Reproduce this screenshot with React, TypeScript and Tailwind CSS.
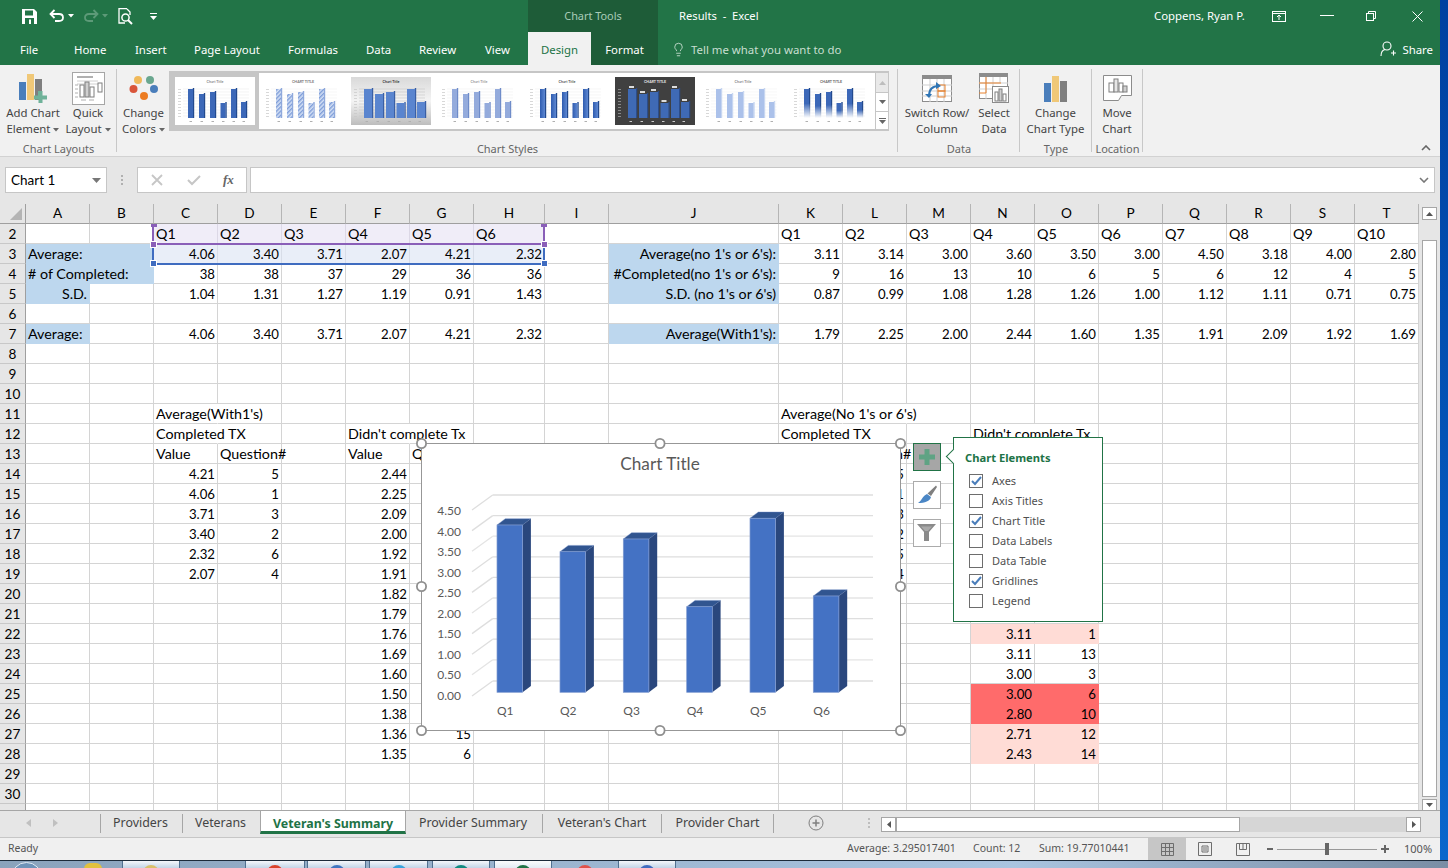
import React from 'react';
import { Lightbulb } from 'lucide-react';

const COLS = 'ABCDEFGHIJKLMNOPQRST'.split('');
type Cell = { t?: string; a?: 'r' | 'l'; bg?: string; nb?: boolean; span?: boolean; skip?: boolean };
const cells: Record<string, Cell> = {};
const put = (k: string, c: Cell) => { cells[k] = { ...(cells[k] || {}), ...c }; };
const rowFill = (row: number, start: string, vals: string[]) => {
  const s = COLS.indexOf(start);
  vals.forEach((v, i) => put(COLS[s + i] + row, { t: v, a: /^[0-9.]+$/.test(v) ? 'r' : 'l' }));
};
const q = (n: number) => Array.from({ length: n }, (_, i) => 'Q' + (i + 1));
rowFill(2, 'C', q(6));
rowFill(2, 'K', q(10));
rowFill(3, 'C', ['4.06', '3.40', '3.71', '2.07', '4.21', '2.32']);
rowFill(3, 'K', ['3.11', '3.14', '3.00', '3.60', '3.50', '3.00', '4.50', '3.18', '4.00', '2.80']);
rowFill(4, 'C', ['38', '38', '37', '29', '36', '36']);
rowFill(4, 'K', ['9', '16', '13', '10', '6', '5', '6', '12', '4', '5']);
rowFill(5, 'C', ['1.04', '1.31', '1.27', '1.19', '0.91', '1.43']);
rowFill(5, 'K', ['0.87', '0.99', '1.08', '1.28', '1.26', '1.00', '1.12', '1.11', '0.71', '0.75']);
rowFill(7, 'C', ['4.06', '3.40', '3.71', '2.07', '4.21', '2.32']);
rowFill(7, 'K', ['1.79', '2.25', '2.00', '2.44', '1.60', '1.35', '1.91', '2.09', '1.92', '1.69']);
const BLUE = 'b';
put('A3', { t: 'Average:', bg: BLUE, span: true }); put('B3', { skip: true });
put('A4', { t: '# of Completed:', bg: BLUE, span: true }); put('B4', { skip: true });
put('A5', { t: 'S.D.', a: 'r', bg: BLUE });
put('A7', { t: 'Average:', bg: BLUE });
put('J3', { t: "Average(no 1's or 6's):", a: 'r', bg: BLUE });
put('J4', { t: "#Completed(no 1's or 6's):", a: 'r', bg: BLUE });
put('J5', { t: "S.D. (no 1's or 6's)", a: 'r', bg: BLUE });
put('J7', { t: "Average(With1's):", a: 'r', bg: BLUE });
put('C11', { t: "Average(With1's)", nb: true });
put('C12', { t: 'Completed TX', nb: true });
put('F12', { t: "Didn't complete Tx", nb: true });
put('K11', { t: "Average(No 1's or 6's)", nb: true }); put('L11', { nb: true });
put('K12', { t: 'Completed TX', nb: true });
put('N12', { t: "Didn't complete Tx", nb: true });
rowFill(13, 'C', ['Value', 'Question#']);
rowFill(13, 'F', ['Value', 'Question#']);
rowFill(13, 'L', ['Question#']);
[['4.21', '5'], ['4.06', '1'], ['3.71', '3'], ['3.40', '2'], ['2.32', '6'], ['2.07', '4']].forEach((r, i) => rowFill(14 + i, 'C', r));
['2.44', '2.25', '2.09', '2.00', '1.92', '1.91', '1.82', '1.79', '1.76', '1.69', '1.60', '1.50', '1.38', '1.36', '1.35'].forEach((v, i) => rowFill(14 + i, 'F', [v]));
rowFill(27, 'G', ['15']);
rowFill(28, 'G', ['6']);
['5', '1', '3', '2', '5', '4'].forEach((v, i) => rowFill(14 + i, 'L', [v]));
[['3.11', '1', 'p'], ['3.11', '13', ''], ['3.00', '3', ''], ['3.00', '6', 'r'], ['2.80', '10', 'r'], ['2.71', '12', 'p'], ['2.43', '14', 'p']].forEach((r, i) => {
  rowFill(22 + i, 'N', [r[0], r[1]]);
  if (r[2]) { put('N' + (22 + i), { bg: r[2] }); put('O' + (22 + i), { bg: r[2] }); }
});
COLS.slice(2, 8).forEach((c) => { put(c + '2', { bg: 'v' }); put(c + '3', { bg: 'w' }); });

function cellClass(c: Cell) {
  const base = 'box-border border-r border-b px-[2px] whitespace-nowrap text-black';
  const fill =
    c.bg === 'b' ? 'bg-[#bdd7ee] border-transparent'
    : c.bg === 'p' ? 'bg-[#ffdcd6] border-transparent'
    : c.bg === 'r' ? 'bg-[#ff6b6b] border-transparent'
    : c.bg === 'v' ? 'bg-[#f0edf8] border-[#dcd8e6]'
    : c.bg === 'w' ? 'bg-[#e9eef8] border-[#d8dde8]'
    : c.nb ? 'border-r-transparent border-b-[#d4d4d4]' : 'border-[#d4d4d4]';
  const numeric = !!c.t && /^[0-9.]+$/.test(c.t);
  const size = numeric ? 'text-[13.2px] leading-[21px]' : 'text-[14.3px] leading-[20px]';
  const dir = c.a === 'r' ? 'text-right' : 'text-left';
  const span = c.span ? 'col-span-2' : '';
  return [base, fill, size, dir, span].join(' ');
}

function Sheet() {
  const rows = Array.from({ length: 30 }, (_, i) => i + 2);
  return (
    <div className="grid grid-cols-[26px_64px_64px_64px_64px_64px_64px_64px_71px_64px_170px_64px_64px_64px_64px_64px_64px_64px_64px_64px_64px] auto-rows-[20px] [font-family:Lato,sans-serif] text-[13.6px]">
      <div className="box-border bg-[#e6e6e6] border-r border-b border-[#9f9f9f] flex items-end justify-end pr-[3px] pb-[3px]">
        <svg width="12" height="12" viewBox="0 0 12 12"><path d="M12 0V12H0Z" fill="#b4b4b4" /></svg>
      </div>
      {COLS.map((c) => (
        <div key={c} className="box-border bg-[#e6e6e6] border-b border-b-[#9f9f9f] border-r border-r-[#b5b5b5] text-center text-black leading-[19px]">{c}</div>
      ))}
      {rows.map((r) => (
        <React.Fragment key={r}>
          <div className="box-border bg-[#e6e6e6] border-r border-r-[#9f9f9f] border-b border-b-[#c8c8c8] text-center text-black leading-[21px]">{r <= 30 ? r : ''}</div>
          {COLS.map((c) => {
            const d = cells[c + r] || {};
            if (d.skip) return null;
            return <div key={c} className={cellClass(d)}>{d.t}</div>;
          })}
        </React.Fragment>
      ))}
    </div>
  );
}

function SelectionFrames() {
  return (
    <>
      <div className="absolute left-[152px] top-[20px] w-[393px] h-[21px] border-x-2 border-b-2 border-[#8a5fb8]" />
      <div className="absolute left-[152px] top-[41px] w-[393px] h-[20px] border-x-2 border-b-2 border-[#3f6cc0]" />
      {[[151, 20], [541, 20]].map(([x, y], i) => (
        <div key={i} className="absolute w-[6px] h-[3px] bg-[#8a5fb8]" style={{ left: x, top: y }} />
      ))}
      {[[150, 37], [541, 37]].map(([x, y], i) => (
        <div key={i} className="absolute w-[7px] h-[7px] bg-[#8a5fb8] border border-white" style={{ left: x, top: y }} />
      ))}
      {[[150, 56], [541, 56]].map(([x, y], i) => (
        <div key={i} className="absolute w-[7px] h-[7px] bg-[#3f6cc0] border border-white" style={{ left: x, top: y }} />
      ))}
    </>
  );
}

const BARS = [
  { l: 'Q1', x: 497, top: 525 },
  { l: 'Q2', x: 560, top: 551.7 },
  { l: 'Q3', x: 623.3, top: 539 },
  { l: 'Q4', x: 686.7, top: 606.7 },
  { l: 'Q5', x: 750, top: 518.3 },
  { l: 'Q6', x: 813.3, top: 596 },
];
const GRID_Y = [495, 515.6, 536.2, 556.8, 577.4, 598, 618.6, 639.2, 659.8, 681];
const AXIS = ['4.50', '4.00', '3.50', '3.00', '2.50', '2.00', '1.50', '1.00', '0.50', '0.00'];

function Chart() {
  const hs = [[421.5, 443.5], [660, 443.5], [900.5, 443.5], [421.5, 586.5], [900.5, 586.5], [421.5, 730.5], [660, 730.5], [900.5, 730.5]];
  return (
    <div className="absolute left-[421px] top-[239px] w-[480px] h-[288px] bg-white border-[1.5px] border-[#979797] box-border">
      <svg className="absolute left-[-1.5px] top-[-0.5px] overflow-visible [font-family:Lato,sans-serif]" width="480" height="287" viewBox="421 444 480 287">
        <text x="660" y="470" textAnchor="middle" fontSize="17.2" fill="#595959">Chart Title</text>
        {GRID_Y.map((y, i) => (
          <g key={i} stroke={i % 3 === 2 ? '#e4e4e4' : '#dedede'} strokeWidth="1.3">
            <line x1="492.7" y1={y} x2="873" y2={y} />
            <line x1="472" y1={y + 15} x2="492.7" y2={y} />
          </g>
        ))}
        {AXIS.map((a, i) => (
          <text key={a} x="461" y={515 + i * 20.55} textAnchor="end" fontSize="12" fill="#595959">{a}</text>
        ))}
        {BARS.map((b) => (
          <g key={b.l}>
            <path d={`M${b.x} ${b.top}l8.3 -6.3h25.6l-8.3 6.3z`} fill="#315590" stroke="#6f8cc4" strokeWidth=".4" />
            <path d={`M${b.x + 25.6} ${b.top}l8.3 -6.3V686l-8.3 6.3z`} fill="#2a477d" />
            <rect x={b.x} y={b.top} width="25.6" height={692.3 - b.top} fill="#4472c4" stroke="#7f9ad0" strokeWidth=".7" />
            <text x={b.x} y="715" fontSize="12" fill="#595959">{b.l}</text>
          </g>
        ))}
        {hs.map(([x, y], i) => (
          <circle key={i} cx={x} cy={y} r="4.6" fill="#fff" stroke="#8f8f8f" strokeWidth="1.8" />
        ))}
      </svg>
    </div>
  );
}

function ChartButtons() {
  return (
    <div className="absolute left-[913px] top-[239px] flex flex-col gap-[10px]">
      <div className="w-[28px] h-[28px] box-border bg-[#a6a6a6] border border-[#217346] flex items-center justify-center">
        <svg width="16" height="16" viewBox="0 0 16 16"><path d="M5.5 0h5v5.5H16v5h-5.5V16h-5v-5.5H0v-5h5.5z" fill="#5fa384" /></svg>
      </div>
      <div className="w-[28px] h-[28px] box-border bg-white border border-[#ababab]">
        <svg width="26" height="26" viewBox="1 1 26 26"><path d="M23 4.500l1 1.500-6 9-3.500-2.500z" fill="#7f7f7f" /><path d="M14 13l4 3c-1 4-6 6-13 6 4-2 4-7 9-9z" fill="#4a86c5" /></svg>
      </div>
      <div className="w-[28px] h-[28px] box-border bg-white border border-[#ababab]">
        <svg width="26" height="26" viewBox="1 1 26 26"><path d="M4 5h19l-7 8v9h-5v-9z" fill="#8a8a8a" /><path d="M8 7.500h11l-4 4.500h-3z" fill="#a9a9a9" /></svg>
      </div>
    </div>
  );
}

function CheckRow({ label, on }: { label: string; on?: boolean }) {
  return (
    <div className="flex items-center h-[20px]">
      <div className="w-[14px] h-[14px] box-border border border-[#6d6d6d] bg-white flex items-center justify-center mr-[9px]">
        {on && <svg width="11" height="10" viewBox="0 0 11 10"><path d="M1 5l3 3 6-7" fill="none" stroke="#4a7ebb" strokeWidth="2" /></svg>}
      </div>
      <span>{label}</span>
    </div>
  );
}

function Popup() {
  return (
    <div className="absolute left-[953px] top-[233px] w-[150px] h-[185px] box-border bg-white border border-[#217346] [font-family:'Noto_Sans',sans-serif] text-[11px] text-[#505050]">
      <div className="absolute left-[-6px] top-[13px] w-[11px] h-[11px] bg-white border-l border-b border-[#217346] rotate-45" />
      <div className="relative pl-[11px] pt-[12px] font-bold text-[#217346] text-[11.2px] leading-[16px]">Chart Elements</div>
      <div className="relative pl-[15px] pt-[5px]">
        <CheckRow label="Axes" on />
        <CheckRow label="Axis Titles" />
        <CheckRow label="Chart Title" on />
        <CheckRow label="Data Labels" />
        <CheckRow label="Data Table" />
        <CheckRow label="Gridlines" on />
        <CheckRow label="Legend" />
      </div>
    </div>
  );
}

const THUMB_H = [29, 24, 26, 15, 29, 16];
const THUMB_X = [13, 24, 35, 45.5, 56, 66];
type TK = { bg: string; front: string; side: string; w: number; title: string; tc: string; grid: string; labels?: boolean };
const TK_LIST: TK[] = [
  { bg: '#ffffff', front: '#3c68b8', side: '#234a8e', w: 5, title: 'Chart Title', tc: '#8a8a8a', grid: '#ececec' },
  { bg: '#ffffff', front: 'url(#hatch)', side: '#8fa9dc', w: 5, title: 'CHART TITLE', tc: '#777', grid: '#f2f2f2' },
  { bg: 'url(#gray)', front: '#5a85cf', side: '#3a5fa4', w: 8, title: 'Chart Title', tc: '#333', grid: '#c8c8c8' },
  { bg: '#ffffff', front: '#94abdc', side: '#6f8cc9', w: 5, title: 'Chart Title', tc: '#999', grid: '#f0f0f0' },
  { bg: '#ffffff', front: 'url(#blue)', side: '#234a8e', w: 5, title: 'Chart Title', tc: '#555', grid: '#f0f0f0' },
  { bg: '#404040', front: '#3f6ab5', side: '#2c4d8a', w: 8, title: 'CHART TITLE', tc: '#e8e8e8', grid: '#404040', labels: true },
  { bg: '#ffffff', front: '#abc1ea', side: '#c7d6f1', w: 5, title: 'Chart Title', tc: '#888', grid: '#f4f4f4' },
  { bg: '#ffffff', front: 'url(#fade)', side: 'url(#fade2)', w: 5, title: 'CHART TITLE', tc: '#666', grid: '#efefef' },
];

function Thumb({ k }: { k: TK }) {
  return (
    <svg width="80" height="48" viewBox="0 0 80 48" className="[font-family:Lato,sans-serif] shrink-0">
      <defs>
        <pattern id="hatch" width="3" height="3" patternUnits="userSpaceOnUse" patternTransform="rotate(45)">
          <rect width="3" height="3" fill="#d4e0f5" /><rect width="1.4" height="3" fill="#7d9cd8" />
        </pattern>
        <linearGradient id="gray" x1="0" y1="0" x2="0" y2="1"><stop offset="0" stopColor="#d9d9d9" /><stop offset=".5" stopColor="#f4f4f4" /><stop offset="1" stopColor="#bdbdbd" /></linearGradient>
        <linearGradient id="blue" x1="0" y1="0" x2="1" y2="0"><stop offset="0" stopColor="#2f5cb0" /><stop offset="1" stopColor="#5e88d2" /></linearGradient>
        <linearGradient id="fade" x1="0" y1="0" x2="0" y2="1"><stop offset=".5" stopColor="#3c68b8" /><stop offset="1" stopColor="#ffffff" /></linearGradient>
        <linearGradient id="fade2" x1="0" y1="0" x2="0" y2="1"><stop offset=".5" stopColor="#234a8e" /><stop offset="1" stopColor="#ffffff" /></linearGradient>
      </defs>
      <rect width="80" height="48" fill={k.bg} />
      <text x="40" y="6" textAnchor="middle" fontSize="3.6" fontWeight="700" fill={k.tc}>{k.title}</text>
      {[12, 15, 18, 21, 24, 27, 30, 33, 36, 39].map((y) => (
        <g key={y}>
          <line x1="8" x2="74" y1={y} y2={y} stroke={k.grid} strokeWidth=".6" />
          <rect x="3" y={y} width="3" height=".7" fill={k.bg === '#404040' ? '#aaa' : '#c8c8c8'} />
        </g>
      ))}
      {THUMB_H.map((h, i) => (
        <g key={i}>
          <rect x={THUMB_X[i] + k.w - 0.2} y={41 - h - 1} width="1.4" height={h + 1} fill={k.side} />
          <rect x={THUMB_X[i]} y={41 - h} width={k.w} height={h} fill={k.front} />
          {k.labels && <rect x={THUMB_X[i] + 1} y={41 - h - 3} width="5" height="2" fill="#ddd" />}
          <rect x={THUMB_X[i] + 1.5} y="44" width="2.5" height="1" fill={k.bg === '#404040' ? '#ccc' : '#b0b0b0'} />
        </g>
      ))}
    </svg>
  );
}

function Big({ w, icon, l1, l2, caret }: { w: number; icon: React.ReactNode; l1: string; l2: string; caret?: boolean }) {
  return (
    <div className="flex flex-col items-center shrink-0" style={{ width: w }}>
      <div className="h-[38px] w-full flex items-center justify-center">{icon}</div>
      <div className="leading-[16px] mt-[-2px] whitespace-nowrap text-center">{l1}</div>
      <div className="leading-[16px] whitespace-nowrap text-center flex items-center justify-center">
        {l2}
        {caret && <svg className="ml-[3px] mt-[1px]" width="6" height="4" viewBox="0 0 6 4"><path d="M0 0h6L3 3.500z" fill="#666" /></svg>}
      </div>
    </div>
  );
}

function Group({ w, label, children, border = true }: { w: number; label: string; children: React.ReactNode; border?: boolean }) {
  return (
    <div className="relative shrink-0 h-full flex flex-col" style={{ width: w }}>
      <div className="flex flex-1 pt-[4px]">{children}</div>
      <div className="h-[22px] leading-[24px] text-center text-[11px] text-[#666]">{label}</div>
      {border && <div className="absolute right-0 top-[4px] bottom-[4px] w-px bg-[#c8c8c8]" />}
    </div>
  );
}

function Ribbon() {
  return (
    <div className="relative h-[92px] bg-[#f1f1f1] border-b border-[#d2d2d2] box-border flex text-[11.4px] text-[#444] [font-family:'Noto_Sans',sans-serif]">
      <Group w={117} label="Chart Layouts">
        <Big w={66} l1="Add Chart" l2="Element" caret icon={
          <svg width="30" height="30" viewBox="0 0 30 30"><rect x="1" y="9" width="7" height="18" fill="#4a7ebb" /><rect x="9" y="1" width="7" height="26" fill="#f0c878" /><rect x="17" y="6" width="7" height="21" fill="#7f7f7f" /><path d="M20 18h4.500v4.500H29v4h-4.500V30h-4v-3.500H16v-4h4z" fill="#6fb299" /></svg>
        } />
        <Big w={44} l1="Quick" l2="Layout" caret icon={
          <svg width="33" height="33" viewBox="0 0 33 33"><rect x=".5" y=".5" width="32" height="32" fill="#fff" stroke="#a6a6a6" /><rect x="5" y="4" width="16" height="2" fill="#b0b0b0" /><path d="M5 9h21M5 12h21" stroke="#d0d0d0" /><rect x="8" y="13" width="4" height="12" fill="#fff" stroke="#7f7f7f" /><rect x="13" y="10" width="4" height="15" fill="#d0d0d0" stroke="#7f7f7f" /><rect x="18" y="15" width="4" height="10" fill="#fff" stroke="#7f7f7f" /><rect x="26" y="11" width="4" height="9" fill="#fff" stroke="#7f7f7f" /><path d="M3 13h3M3 17h3M3 21h3M3 25h3M9 28h5M17 28h5" stroke="#b0b0b0" /></svg>
        } />
      </Group>
      <Group w={781} label="Chart Styles">
        <div className="w-[53px] shrink-0">
          <Big w={53} l1="Change" l2="Colors" caret icon={
            <svg width="30" height="30" viewBox="0 0 30 30"><circle cx="9" cy="7" r="4" fill="#f0b95a" /><circle cx="21" cy="7" r="4" fill="#6aa78f" /><circle cx="4.500" cy="16" r="4" fill="#d9553a" /><circle cx="25" cy="16" r="4" fill="#4a7ebb" /><circle cx="15" cy="23" r="4" fill="#ec7c22" /></svg>
          } />
        </div>
        <div className="ml-[-1px] mt-[2px] h-[60px] w-[720px] box-border border-2 border-[#c6c6c6] border-r-0 bg-white flex">
          <div className="w-[704px] flex items-center">
            {TK_LIST.map((k, i) => (
              <div key={i} className={i === 0 ? 'w-[88px] h-[56px] bg-[#c6c6c6] flex items-center justify-center shrink-0' : 'w-[88px] h-[56px] flex items-center justify-center shrink-0'}>
                <Thumb k={k} />
              </div>
            ))}
          </div>
          <div className="w-[14px] flex flex-col text-[#777] border-l border-[#c6c6c6] border-r">
            <div className="h-[20px] bg-[#e9e9e9] flex items-center justify-center border-b border-[#c6c6c6]"><svg width="7" height="4" viewBox="0 0 7 4"><path d="M0 4h7L3.500 0z" fill="#bdbdbd" /></svg></div>
            <div className="h-[19px] flex items-center justify-center border-b border-[#c6c6c6]"><svg width="7" height="4" viewBox="0 0 7 4"><path d="M0 0h7L3.500 4z" fill="#666" /></svg></div>
            <div className="flex-1 flex flex-col items-center justify-center"><div className="w-[7px] h-px bg-[#666] mb-[1px]" /><svg width="7" height="4" viewBox="0 0 7 4"><path d="M0 0h7L3.500 4z" fill="#666" /></svg></div>
          </div>
        </div>
      </Group>
      <Group w={122} label="Data">
        <Big w={78} l1="Switch Row/" l2="Column" icon={
          <svg width="30" height="27" viewBox="0 0 30 27"><rect x=".5" y=".5" width="29" height="26" fill="#fff" stroke="#8c8c8c" /><rect x="0" y="0" width="30" height="4" fill="#8c8c8c" /><path d="M0 10h30M0 16h30M0 21h30M8 4v23M15 4v23M22 4v23" stroke="#cfcfcf" /><rect x="16" y="10" width="7" height="6" fill="none" stroke="#e8822f" /><rect x="16" y="16" width="7" height="6" fill="none" stroke="#e8822f" /><path d="M7 21c0-7 4-10 10-10" fill="none" stroke="#2f75b5" strokeWidth="2" /><path d="M14 7l5 4-5 3zM3 19l4 4 3-4z" fill="#2f75b5" /></svg>
        } />
        <Big w={36} l1="Select" l2="Data" icon={
          <svg width="30" height="30" viewBox="0 0 30 30"><rect x=".5" y=".5" width="28" height="25" fill="#fff" stroke="#8c8c8c" /><rect x="0" y="0" width="29" height="4" fill="#8c8c8c" /><path d="M0 10h29M0 16h29M7 4v22M14 4v22M21 4v6" stroke="#cfcfcf" /><path d="M7 4v16M0 10h22M0 20h7" stroke="#e8822f" fill="none" /><rect x="13.500" y="13.500" width="16" height="16" fill="#fff" stroke="#8c8c8c" /><rect x="16" y="19" width="3" height="9" fill="#fff" stroke="#7f7f7f" /><rect x="20" y="16" width="3" height="12" fill="#d0d0d0" stroke="#7f7f7f" /><rect x="24" y="21" width="3" height="7" fill="#fff" stroke="#7f7f7f" /></svg>
        } />
      </Group>
      <Group w={72} label="Type">
        <Big w={71} l1="Change" l2="Chart Type" icon={
          <svg width="24" height="27" viewBox="0 0 24 27"><rect x="0" y="8" width="7" height="19" fill="#4a7ebb" /><rect x="8" y="1" width="7" height="26" fill="#f0c878" /><rect x="16" y="6" width="7" height="21" fill="#7f7f7f" /></svg>
        } />
      </Group>
      <Group w={51} label="Location">
        <Big w={50} l1="Move" l2="Chart" icon={
          <svg width="29" height="27" viewBox="0 0 29 27"><path d="M.5 .5h28v20h-10l-3 5H.5z" fill="#fff" stroke="#8c8c8c" /><rect x="6" y="8" width="5" height="9" fill="#fff" stroke="#7f7f7f" /><rect x="11" y="4" width="4" height="13" fill="#e6e6e6" stroke="#7f7f7f" /><rect x="16" y="8" width="4" height="9" fill="#fff" stroke="#7f7f7f" /><rect x="20" y="11" width="4" height="6" fill="#d0d0d0" stroke="#7f7f7f" /></svg>
        } />
      </Group>
      <div className="flex-1 flex items-end justify-end pr-[9px] pb-[5px]">
        <svg width="10" height="6" viewBox="0 0 10 6"><path d="M1 5l4-4 4 4" fill="none" stroke="#666" strokeWidth="1.600" /></svg>
      </div>
    </div>
  );
}

function FormulaBar() {
  return (
    <div className="h-[47px] box-border bg-[#e6e6e6] flex items-start pt-[10px] pl-[5px] pr-[5px]">
      <div className="w-[102px] h-[26px] box-border bg-white border border-[#c6c6c6] flex items-center justify-between px-[5px] text-[13.5px] text-black [font-family:Lato,sans-serif]">
        <span className="pt-[1px]">Chart 1</span>
        <svg width="9" height="5" viewBox="0 0 9 5"><path d="M0 0h9L4.500 5z" fill="#777" /></svg>
      </div>
      <div className="w-[30px] h-[26px] flex flex-col items-center justify-center gap-[2px]">
        <div className="w-[2px] h-[2px] bg-[#b0b0b0]" /><div className="w-[2px] h-[2px] bg-[#b0b0b0]" /><div className="w-[2px] h-[2px] bg-[#b0b0b0]" />
      </div>
      <div className="w-[110px] h-[26px] box-border bg-white border border-[#c6c6c6] flex items-center pl-[13px] gap-[24px] shrink-0">
        <svg width="12" height="12" viewBox="0 0 12 12"><path d="M1 1l10 10M11 1L1 11" stroke="#c6c6c6" strokeWidth="1.800" /></svg>
        <svg width="14" height="12" viewBox="0 0 14 12"><path d="M1 6l4 4 8-8" fill="none" stroke="#c6c6c6" strokeWidth="2" /></svg>
        <span className="[font-family:'Liberation_Serif',serif] italic font-bold text-[13px] text-[#666] ml-[-2px]">fx</span>
      </div>
      <div className="ml-[3px] flex-1 h-[26px] box-border bg-white border border-[#c6c6c6] flex items-center justify-end pr-[5px]">
        <svg width="10" height="6" viewBox="0 0 10 6"><path d="M1 1l4 4 4-4" fill="none" stroke="#777" strokeWidth="1.600" /></svg>
      </div>
    </div>
  );
}

function TitleBar() {
  return (
    <div className="h-[32px] flex text-[11.2px] text-white">
      <div className="w-[528px] flex items-center shrink-0">
        <div className="w-[22px]" />
        <svg width="15" height="15" viewBox="0 0 15 15"><path d="M0 0h12l3 3v12H0z" fill="#fff" /><rect x="3" y="1.500" width="8" height="5" fill="#217346" /><rect x="3" y="9" width="9" height="6" fill="#217346" /><rect x="7" y="10.500" width="2" height="4.500" fill="#fff" /></svg>
        <svg className="ml-[12px]" width="16" height="14" viewBox="0 0 16 14"><path d="M2 5h8c3 0 4 2 4 3.500S13 12 10 12H6" fill="none" stroke="#fff" strokeWidth="1.800" /><path d="M5.500 1L1.500 5l4 4" fill="none" stroke="#fff" strokeWidth="1.800" /></svg>
        <svg className="ml-[3px]" width="6" height="4" viewBox="0 0 6 4"><path d="M0 0h6L3 3.500z" fill="#fff" /></svg>
        <svg className="ml-[9px]" width="16" height="14" viewBox="0 0 16 14"><path d="M14 5H6C3 5 2 7 2 8.500S3 12 6 12h4" fill="none" stroke="#5d9a78" strokeWidth="1.800" /><path d="M10.500 1l4 4-4 4" fill="none" stroke="#5d9a78" strokeWidth="1.800" /></svg>
        <svg className="ml-[3px]" width="6" height="4" viewBox="0 0 6 4"><path d="M0 0h6L3 3.500z" fill="#5d9a78" /></svg>
        <svg className="ml-[10px]" width="16" height="17" viewBox="0 0 16 17"><path d="M9 .700H1V15h6" fill="none" stroke="#fff" strokeWidth="1.300" /><path d="M9 1l3 3v3" fill="none" stroke="#fff" strokeWidth="1.300" /><circle cx="7.500" cy="9.500" r="3.600" fill="none" stroke="#fff" strokeWidth="1.500" /><path d="M10 12l4 4" stroke="#fff" strokeWidth="2" /></svg>
        <svg className="ml-[16px]" width="7" height="7" viewBox="0 0 7 7"><rect width="7" height="1" y="0" fill="#fff" /><path d="M0 3h7L3.500 7z" fill="#fff" /></svg>
      </div>
      <div className="w-[130px] shrink-0 bg-[#1e5c38] flex items-center justify-center text-[#a9ccb8] text-[10.9px]">Chart Tools</div>
      <div className="flex-1 pl-[21px] flex items-center whitespace-pre">Results  -  Excel</div>
      <div className="w-[286px] shrink-0 flex items-center">
        <span className="w-[118px] shrink-0 text-[11.4px]">Coppens, Ryan P.</span>
        <svg width="14" height="11" viewBox="0 0 14 11"><rect x=".5" y=".5" width="13" height="10" fill="none" stroke="#fff" /><path d="M0 2.500h14" stroke="#fff" /><path d="M7 9V4M5 6l2-2 2 2" fill="none" stroke="#fff" /></svg>
        <svg className="ml-[34px]" width="14" height="2" viewBox="0 0 14 2"><rect width="14" height="1" fill="#fff" /></svg>
        <svg className="ml-[32px]" width="10" height="10" viewBox="0 0 10 10"><rect x=".5" y="2.500" width="7" height="7" fill="none" stroke="#fff" /><path d="M2.500 2.500v-2h7v7h-2" fill="none" stroke="#fff" /></svg>
        <svg className="ml-[36px]" width="11" height="11" viewBox="0 0 11 11"><path d="M.5.5l10 10M10.500.5l-10 10" stroke="#fff" /></svg>
      </div>
    </div>
  );
}

function TabRow() {
  const tabs: [string, string][] = [['File', 'w-[74px] pl-[20px]'], ['Home', 'w-[61px]'], ['Insert', 'w-[59px]'], ['Page Layout', 'w-[94px]'], ['Formulas', 'w-[78px]'], ['Data', 'w-[53px]'], ['Review', 'w-[66px]'], ['View', 'w-[43px]']];
  return (
    <div className="h-[33px] flex text-[11.4px] text-white">
      {tabs.map(([t, c]) => <div key={t} className={c + ' shrink-0 flex items-center pt-[2px]'}>{t}</div>)}
      <div className="w-[63px] shrink-0 bg-[#f1f1f1] text-[#217346] flex items-center justify-center pt-[2px]">Design</div>
      <div className="w-[67px] shrink-0 bg-[#1e5c38] flex items-center justify-center pt-[2px]">Format</div>
      <div className="flex-1 flex items-center pl-[13px] text-[#c8dfd1] pt-[2px]">
        <Lightbulb size={15} strokeWidth={1.4} className="mr-[5px]" />
        Tell me what you want to do
      </div>
      <div className="flex items-center pr-[7px] pt-[2px]">
        <svg className="mr-[6px]" width="16" height="17" viewBox="0 0 16 17"><circle cx="7" cy="5" r="4" fill="none" stroke="#fff" strokeWidth="1.100" /><path d="M1 15c0-4 2-6 4-6.500M11 12h5M13.500 9.500v5" fill="none" stroke="#fff" strokeWidth="1.100" /></svg>
        Share
      </div>
    </div>
  );
}

function SheetTabs() {
  const Sep = () => <div className="w-px h-[19px] bg-[#a6a6a6] shrink-0" />;
  return (
    <div className="h-[28px] box-border bg-[#e6e6e6] border-t border-[#a6a6a6] border-b border-b-[#c6c6c6] flex items-start text-[12.4px] text-[#444] [font-family:'Noto_Sans',sans-serif]">
      <div className="w-[100px] h-[24px] shrink-0 flex items-center pl-[26px] gap-[22px]">
        <svg width="5" height="8" viewBox="0 0 5 8"><path d="M5 0v8L0 4z" fill="#c0c0c0" /></svg>
        <svg width="5" height="8" viewBox="0 0 5 8"><path d="M0 0v8l5-4z" fill="#c0c0c0" /></svg>
      </div>
      <div className="flex items-center h-[24px] shrink-0">
        <Sep />
        <div className="w-[81px] text-center pr-[2px]">Providers</div>
        <Sep />
        <div className="w-[77px] text-center pr-[2px]">Veterans</div>
      </div>
      <div className="w-[146px] h-[24px] box-border shrink-0 mt-[-1px] bg-white border-x border-t border-[#a6a6a6] border-b-[3px] border-b-[#217346] text-center font-bold text-[#217346] leading-[25px]">Veteran's Summary</div>
      <div className="flex items-center h-[24px] shrink-0">
        <div className="w-[136px] text-center pr-[2px]">Provider Summary</div>
        <Sep />
        <div className="w-[118px] text-center">Veteran's Chart</div>
        <Sep />
        <div className="w-[111px] text-center">Provider Chart</div>
        <Sep />
      </div>
      <div className="w-[83px] h-[24px] shrink-0 flex items-center justify-center">
        <svg width="16" height="16" viewBox="0 0 16 16"><circle cx="8" cy="8" r="7" fill="none" stroke="#7f7f7f" /><path d="M4.500 8h7M8 4.500v7" stroke="#7f7f7f" strokeWidth="1.500" /></svg>
      </div>
      <div className="w-[24px] h-[24px] shrink-0 flex flex-col items-center justify-center gap-[2px]">
        <div className="w-[2px] h-[2px] bg-[#bdbdbd]" /><div className="w-[2px] h-[2px] bg-[#bdbdbd]" /><div className="w-[2px] h-[2px] bg-[#bdbdbd]" />
      </div>
      <div className="flex-1 flex items-start h-[15px] mt-[6px] mr-[19px] bg-[#d6d6d6]">
        <div className="w-[15px] h-[15px] box-border bg-white border border-[#a6a6a6] flex items-center justify-center shrink-0"><svg width="4" height="7" viewBox="0 0 4 7"><path d="M4 0v7L0 3.500z" fill="#555" /></svg></div>
        <div className="w-[344px] h-[15px] box-border bg-white border border-[#a6a6a6] shrink-0" />
        <div className="flex-1" />
        <div className="w-[15px] h-[15px] box-border bg-white border border-[#a6a6a6] flex items-center justify-center shrink-0"><svg width="4" height="7" viewBox="0 0 4 7"><path d="M0 0v7l4-3.500z" fill="#555" /></svg></div>
      </div>
    </div>
  );
}

function StatusBar() {
  return (
    <div className="h-[22px] bg-[#f0f0f0] flex items-center text-[10.5px] text-[#555] [font-family:'Noto_Sans',sans-serif]">
      <div className="w-[847px] pl-[8px] shrink-0">Ready</div>
      <div className="w-[126px] shrink-0">Average: 3.295017401</div>
      <div className="w-[66px] shrink-0">Count: 12</div>
      <div className="w-[109px] shrink-0">Sum: 19.77010441</div>
      <div className="w-[38px] h-[22px] bg-[#c6c6c6] flex items-center justify-center shrink-0">
        <svg width="13" height="13" viewBox="0 0 13 13"><path d="M.5.500h12v12H.5zM4.500.500v12M8.500.500v12M.5 4.500h12M.5 8.500h12" fill="none" stroke="#6e6e6e" /></svg>
      </div>
      <div className="w-[38px] flex justify-center shrink-0">
        <svg width="14" height="14" viewBox="0 0 14 14"><path d="M.5.500h13v13H.5zM4 4h6v6H4zM5 6h4M5 8h4" fill="none" stroke="#6e6e6e" /></svg>
      </div>
      <div className="w-[38px] flex justify-center shrink-0">
        <svg width="14" height="13" viewBox="0 0 14 13"><path d="M.5.500h13v12H.5zM3.500.5v6h7v-6M7 .5v6" fill="none" stroke="#6e6e6e" /></svg>
      </div>
      <div className="w-[5px] shrink-0" />
      <div className="w-[6px] h-[2px] bg-[#666] shrink-0" />
      <div className="ml-[4px] w-[100px] h-px bg-[#999] relative shrink-0">
        <div className="absolute left-[48px] top-[-6px] w-[4px] h-[12px] bg-[#666]" />
      </div>
      <svg className="ml-[4px]" width="8" height="8" viewBox="0 0 8 8"><path d="M0 4h8M4 0v8" stroke="#666" strokeWidth="2" /></svg>
      <div className="ml-[15px] text-[11px]">100%</div>
    </div>
  );
}

function VScroll() {
  return (
    <div className="w-[21px] shrink-0 bg-[#e6e6e6] flex flex-col items-center pt-[3px]">
      <div className="w-[15px] h-[13px] box-border bg-white border border-[#a6a6a6] flex items-center justify-center shrink-0"><svg width="7" height="4" viewBox="0 0 7 4"><path d="M0 4h7L3.500 0z" fill="#555" /></svg></div>
      <div className="w-[15px] h-[557px] box-border mt-[20px] bg-white border border-[#a6a6a6] shrink-0" />
      <div className="w-[15px] h-[12px] box-border mt-[2px] bg-white border border-[#a6a6a6] flex items-center justify-center shrink-0"><svg width="7" height="4" viewBox="0 0 7 4"><path d="M0 0h7L3.500 4z" fill="#555" /></svg></div>
    </div>
  );
}

function Taskbar() {
  const btns: [string, string, string, string][] = [
    ['ml-[122px]', 'w-[58px]', '#d9c06a', 'bg-gradient-to-b from-[#f4f7fb] to-[#bcd0e4] border-x border-[#50708f]'],
    ['ml-[65px]', 'w-[60px]', '#d9432c', 'bg-gradient-to-b from-[#f4f7fb] to-[#bcd0e4] border-x border-[#50708f]'],
    ['ml-[2px]', 'w-[59px]', '#3f75c0', 'bg-gradient-to-b from-[#f4f7fb] to-[#bcd0e4] border-x border-[#50708f]'],
    ['ml-[3px]', 'w-[59px]', '#36a3dc', 'bg-gradient-to-b from-[#f4f7fb] to-[#bcd0e4] border-x border-[#50708f]'],
    ['ml-[4px]', 'w-[58px]', '#0f8a80', 'bg-gradient-to-b from-[#f4f7fb] to-[#bcd0e4] border-x border-[#50708f]'],
    ['ml-[4px]', 'w-[58px]', '#217346', 'bg-gradient-to-b from-[#fbfcfd] to-[#dfe8f2] border-x border-[#50708f]'],
    ['ml-[0px]', 'w-[66px]', '#e0524a', ''],
    ['ml-[0px]', 'w-[58px]', '#3f6cc0', 'bg-gradient-to-b from-[#f4f7fb] to-[#bcd0e4] border-x border-[#50708f]'],
  ];
  return (
    <div className="relative h-[8px] border-t border-[#1c2b3a] bg-gradient-to-r from-[#8aa3bc] via-[#a9c4e0] via-70% to-[#7a8ea5] flex overflow-hidden box-border">
      <div className="absolute left-[11px] top-[1px] w-[31px] h-[31px] rounded-full bg-[#6e93b8] border border-[#dfe9f3]" />
      <div className="absolute left-[84px] top-[2px] w-[18px] h-[12px] rounded-full bg-[#e2c13d]" />
      {btns.map(([m, w, col, bg], i) => (
        <div key={i} className={m + ' ' + w + ' ' + bg + ' h-[8px] flex justify-center shrink-0'}>
          <div className="w-[16px] h-[8px] rounded-t-full mt-[4px]" style={{ backgroundColor: col }} />
        </div>
      ))}
    </div>
  );
}

export default function App() {
  return (
    <div className="w-[1448px] h-[868px] overflow-hidden flex flex-col [font-family:'Noto_Sans',sans-serif] bg-white">
      <div className="flex h-[860px] shrink-0">
        <div className="w-[1440px] shrink-0 flex flex-col">
          <div className="bg-[#227447]">
            <TitleBar />
            <TabRow />
          </div>
          <Ribbon />
          <FormulaBar />
          <div className="relative h-[606px] flex overflow-hidden">
            <div className="w-[1419px] shrink-0 h-full overflow-hidden">
              <Sheet />
            </div>
            <VScroll />
            <SelectionFrames />
            <Chart />
            <ChartButtons />
            <Popup />
          </div>
          <SheetTabs />
          <StatusBar />
        </div>
        <div className="w-[8px] shrink-0 bg-gradient-to-b from-[#0040a0] to-[#0a66cc]" />
      </div>
      <Taskbar />
    </div>
  );
}
